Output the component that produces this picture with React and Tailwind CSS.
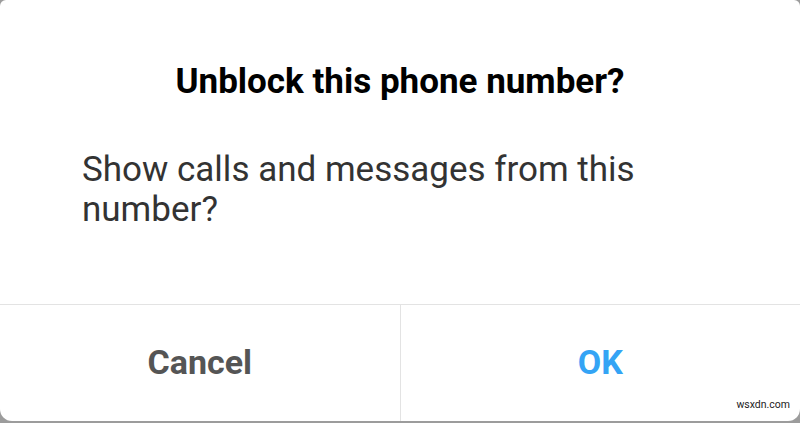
export default function App() {
  return (
    <div className="h-[423px] w-full bg-[#9c9c9c] pb-[2px]" style={{ fontFamily: "Roboto, 'Noto Sans', sans-serif" }}>
      <div className="relative flex h-full flex-col overflow-hidden rounded-t-[6px] rounded-b-[12px] bg-white">
        {/* title */}
        <h1 className="pt-[62px] text-center text-[35px] font-bold leading-[40px] text-black">
          Unblock this phone number?
        </h1>

        {/* message */}
        <p className="mt-[48px] px-[82px] text-[35px] leading-[40px] text-[#333]">
          Show calls and messages from this number?
        </p>

        {/* actions */}
        <div className="mt-auto flex h-[117px] border-t border-[#e3e3e3]">
          <button className="flex-1 pb-[2px] text-[34px] font-bold text-[#555]">Cancel</button>
          <div className="w-px bg-[#e3e3e3]" />
          <button className="flex-1 pb-[2px] text-[34px] font-bold text-[#34a4f5]">OK</button>
        </div>

        <span className="absolute bottom-[11px] right-[10px] text-[10.5px] leading-none text-[#222]">wsxdn.com</span>
      </div>
    </div>
  );
}
